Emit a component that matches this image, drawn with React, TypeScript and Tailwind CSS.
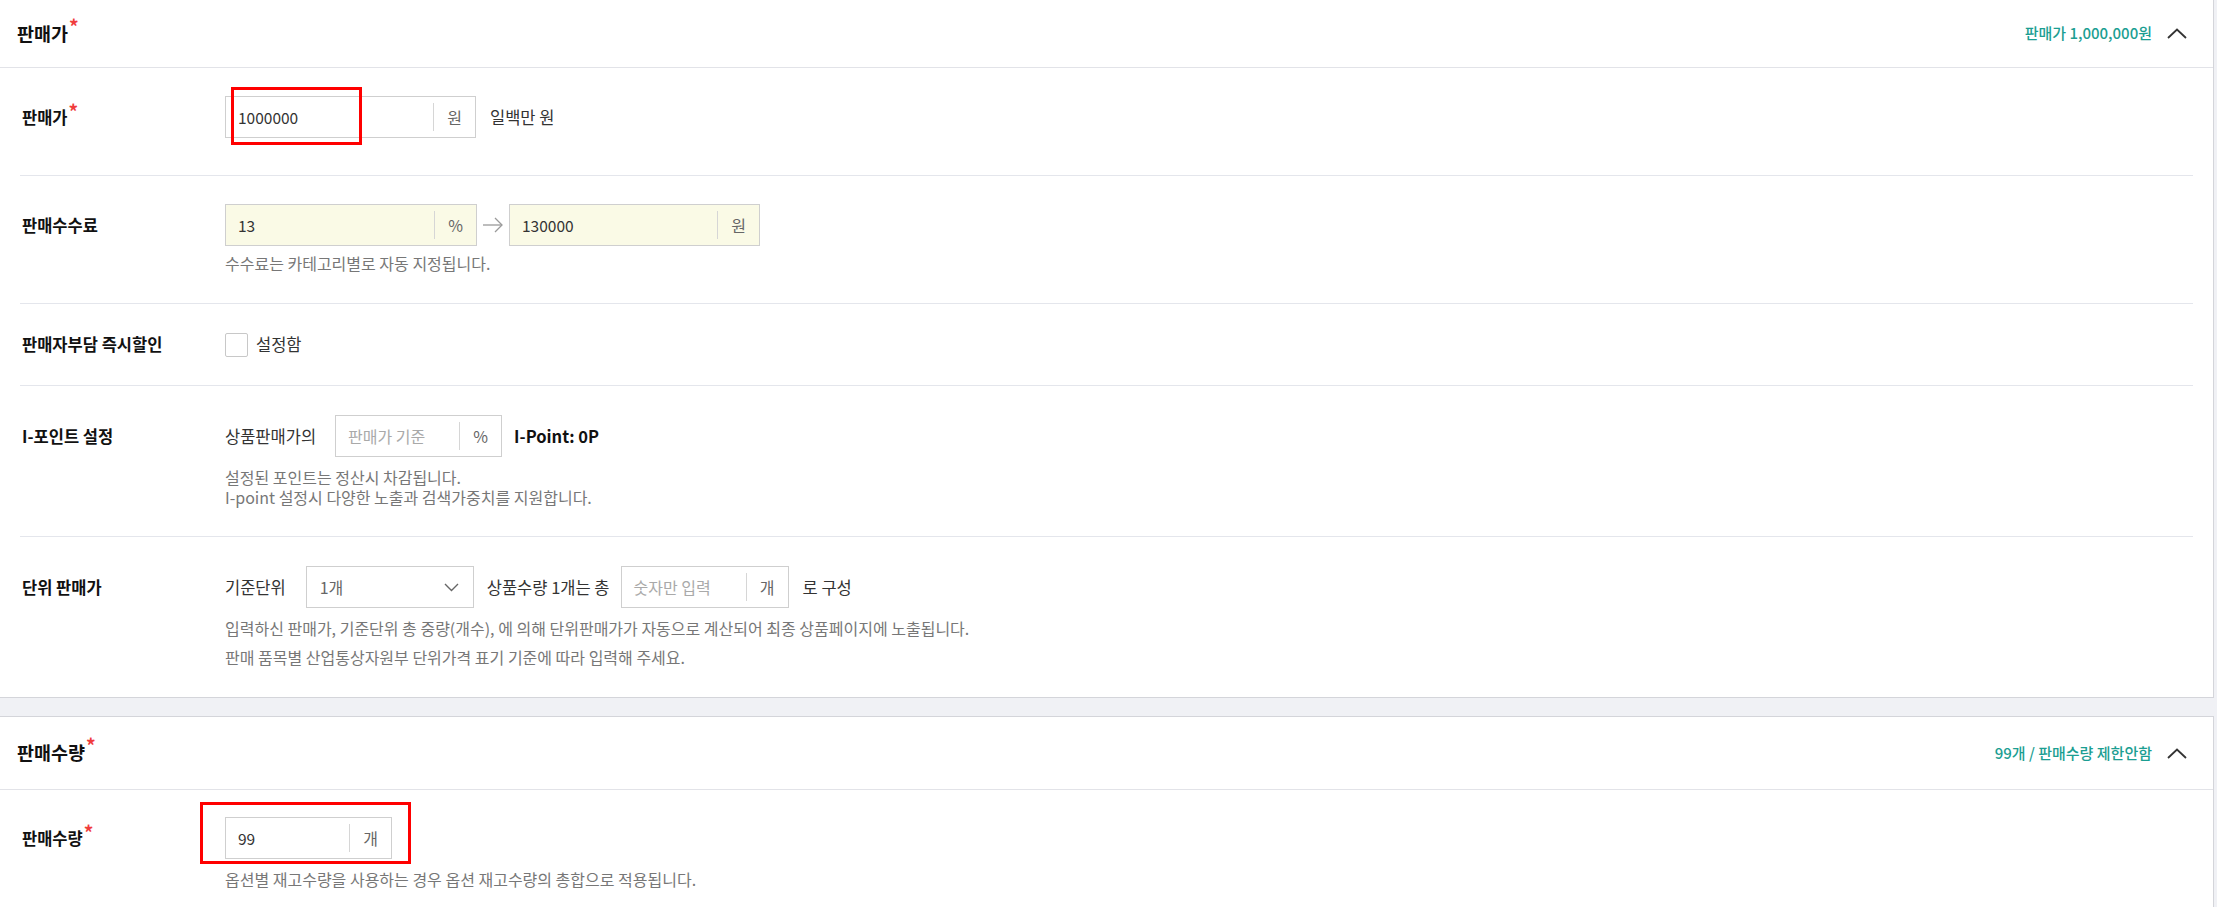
import React from "react";

function Star() {
  return <span className="relative -top-[7px] ml-[1px] text-[19px] font-bold leading-none text-[#f03c3c]">*</span>;
}

function ChevronUp() {
  return (
    <svg width="20" height="11" viewBox="0 0 20 11" fill="none" className="ml-[15px]">
      <path d="M1 10 L10 1.5 L19 10" stroke="#333" strokeWidth="1.8" />
    </svg>
  );
}

function ChevronDown() {
  return (
    <svg width="15" height="9" viewBox="0 0 15 9" fill="none">
      <path d="M1 1 L7.5 7.5 L14 1" stroke="#666" strokeWidth="1.4" />
    </svg>
  );
}

function ArrowRight() {
  return (
    <svg width="22" height="16" viewBox="0 0 22 16" fill="none" className="mx-[5px]">
      <path d="M1 8 H20" stroke="#9a9a9a" strokeWidth="1.3" />
      <path d="M13 1 L20 8 L13 15" stroke="#9a9a9a" strokeWidth="1.3" />
    </svg>
  );
}

function UnitInput({
  value,
  placeholder,
  unit,
  className,
}: {
  value?: string;
  placeholder?: string;
  unit: string;
  className: string;
}) {
  return (
    <div className={`flex h-[42px] shrink-0 items-center border border-[#cfcfcf] ${className}`}>
      <div className="flex-1 pl-[12px] leading-none">
        {value ? (
          <span className="text-[15.5px] text-[#333]">{value}</span>
        ) : (
          <span className="text-[16px] text-[#a9a9a9]">{placeholder}</span>
        )}
      </div>
      <div className="h-[28px] w-px bg-[#d6d6d6]" />
      <div className="w-[41px] text-center text-[16px] leading-none text-[#666]">{unit}</div>
    </div>
  );
}

function SectionHeader({ title, summary, heightClass }: { title: string; summary: string; heightClass: string }) {
  return (
    <div className={`flex items-center justify-between border-b border-[#e2e3e8] pl-[17px] pr-[26px] ${heightClass}`}>
      <div className="text-[18.5px] font-bold text-[#111]">
        {title}
        <Star />
      </div>
      <div className="flex items-center">
        <span className="text-[15px] font-medium text-[#1b9e92]">{summary}</span>
        <ChevronUp />
      </div>
    </div>
  );
}

function Label({ children, star }: { children: React.ReactNode; star?: boolean }) {
  return (
    <div className="flex h-[42px] w-[205px] shrink-0 items-center pl-[2px] text-[16.5px] font-bold text-[#111]">
      {children}
      {star && <Star />}
    </div>
  );
}

function Help({ children, className = "" }: { children: React.ReactNode; className?: string }) {
  return <p className={`text-[16px] leading-[20px] text-[#777] ${className}`}>{children}</p>;
}

export default function App() {
  return (
    <div className="relative h-[907px] w-[2217px] overflow-hidden bg-[#f0f1f5] font-['Noto_Sans_CJK_KR','Noto_Sans',sans-serif]">
      {/* Panel 1 */}
      <div className="mr-[3px] border-r border-b border-[#d4d5da] bg-white">
        <SectionHeader title="판매가" summary="판매가 1,000,000원" heightClass="h-[68px]" />

        {/* 판매가 */}
        <div className="mx-[20px] flex border-b border-[#e4e6ec] pt-[28px] pb-[37px]">
          <Label star>판매가</Label>
          <div className="flex items-center">
            <div className="relative">
              <UnitInput value="1000000" unit="원" className="w-[251px] bg-white" />
              <div className="absolute left-[6px] -top-[9px] h-[58px] w-[131px] border-[3px] border-[#ff0000]" />
            </div>
            <span className="ml-[14px] text-[16.5px] text-[#333]">일백만 원</span>
          </div>
        </div>

        {/* 판매수수료 */}
        <div className="mx-[20px] flex border-b border-[#e4e6ec] pt-[28px] pb-[30px]">
          <Label>판매수수료</Label>
          <div className="flex flex-col">
            <div className="flex items-center">
              <UnitInput value="13" unit="%" className="w-[252px] bg-[#fafae6]" />
              <ArrowRight />
              <UnitInput value="130000" unit="원" className="w-[251px] bg-[#fafae6]" />
            </div>
            <Help className="mt-[7px]">수수료는 카테고리별로 자동 지정됩니다.</Help>
          </div>
        </div>

        {/* 판매자부담 즉시할인 */}
        <div className="mx-[20px] flex h-[82px] items-center border-b border-[#e4e6ec]">
          <Label>판매자부담 즉시할인</Label>
          <div className="flex items-center">
            <div className="h-[24px] w-[23px] rounded-[2px] border border-[#c8c8c8] bg-white" />
            <span className="ml-[8px] text-[16.5px] text-[#333]">설정함</span>
          </div>
        </div>

        {/* I-포인트 설정 */}
        <div className="mx-[20px] flex border-b border-[#e4e6ec] pt-[29px] pb-[29px]">
          <Label>I-포인트 설정</Label>
          <div className="flex flex-col">
            <div className="flex items-center">
              <span className="text-[16.5px] text-[#333]">상품판매가의</span>
              <UnitInput placeholder="판매가 기준" unit="%" className="ml-[19px] w-[167px] bg-white" />
              <span className="ml-[12px] text-[16.5px] font-bold text-[#111]">I-Point: 0P</span>
            </div>
            <div className="mt-[10px]">
              <Help>설정된 포인트는 정산시 차감됩니다.</Help>
              <Help>I-point 설정시 다양한 노출과 검색가중치를 지원합니다.</Help>
            </div>
          </div>
        </div>

        {/* 단위 판매가 */}
        <div className="mx-[20px] flex pt-[29px] pb-[30px]">
          <Label>단위 판매가</Label>
          <div className="flex flex-col">
            <div className="flex items-center">
              <span className="text-[16.5px] text-[#333]">기준단위</span>
              <div className="ml-[20px] flex h-[42px] w-[168px] items-center justify-between border border-[#cfcfcf] bg-white pl-[13px] pr-[14px]">
                <span className="text-[16px] leading-none text-[#666]">1개</span>
                <ChevronDown />
              </div>
              <span className="ml-[13px] text-[16.5px] text-[#333]">상품수량 1개는 총</span>
              <UnitInput placeholder="숫자만 입력" unit="개" className="ml-[11px] w-[168px] bg-white" />
              <span className="ml-[14px] text-[16.5px] text-[#333]">로 구성</span>
            </div>
            <Help className="mt-[10px]">
              입력하신 판매가, 기준단위 총 중량(개수), 에 의해 단위판매가가 자동으로 계산되어 최종 상품페이지에 노출됩니다.
            </Help>
            <Help className="mt-[9px]">판매 품목별 산업통상자원부 단위가격 표기 기준에 따라 입력해 주세요.</Help>
          </div>
        </div>
      </div>

      {/* Panel 2 */}
      <div className="mt-[18px] mr-[3px] border-t border-r border-[#d4d5da] bg-white">
        <SectionHeader title="판매수량" summary="99개 / 판매수량 제한안함" heightClass="h-[73px]" />
        <div className="mx-[20px] flex pt-[27px] pb-[30px]">
          <Label star>판매수량</Label>
          <div className="flex flex-col">
            <div className="relative">
              <UnitInput value="99" unit="개" className="w-[167px] bg-white" />
              <div className="absolute -left-[25px] -top-[15px] h-[62px] w-[211px] border-[3px] border-[#ff0000]" />
            </div>
            <Help className="mt-[10px]">옵션별 재고수량을 사용하는 경우 옵션 재고수량의 총합으로 적용됩니다.</Help>
          </div>
        </div>
      </div>
    </div>
  );
}
